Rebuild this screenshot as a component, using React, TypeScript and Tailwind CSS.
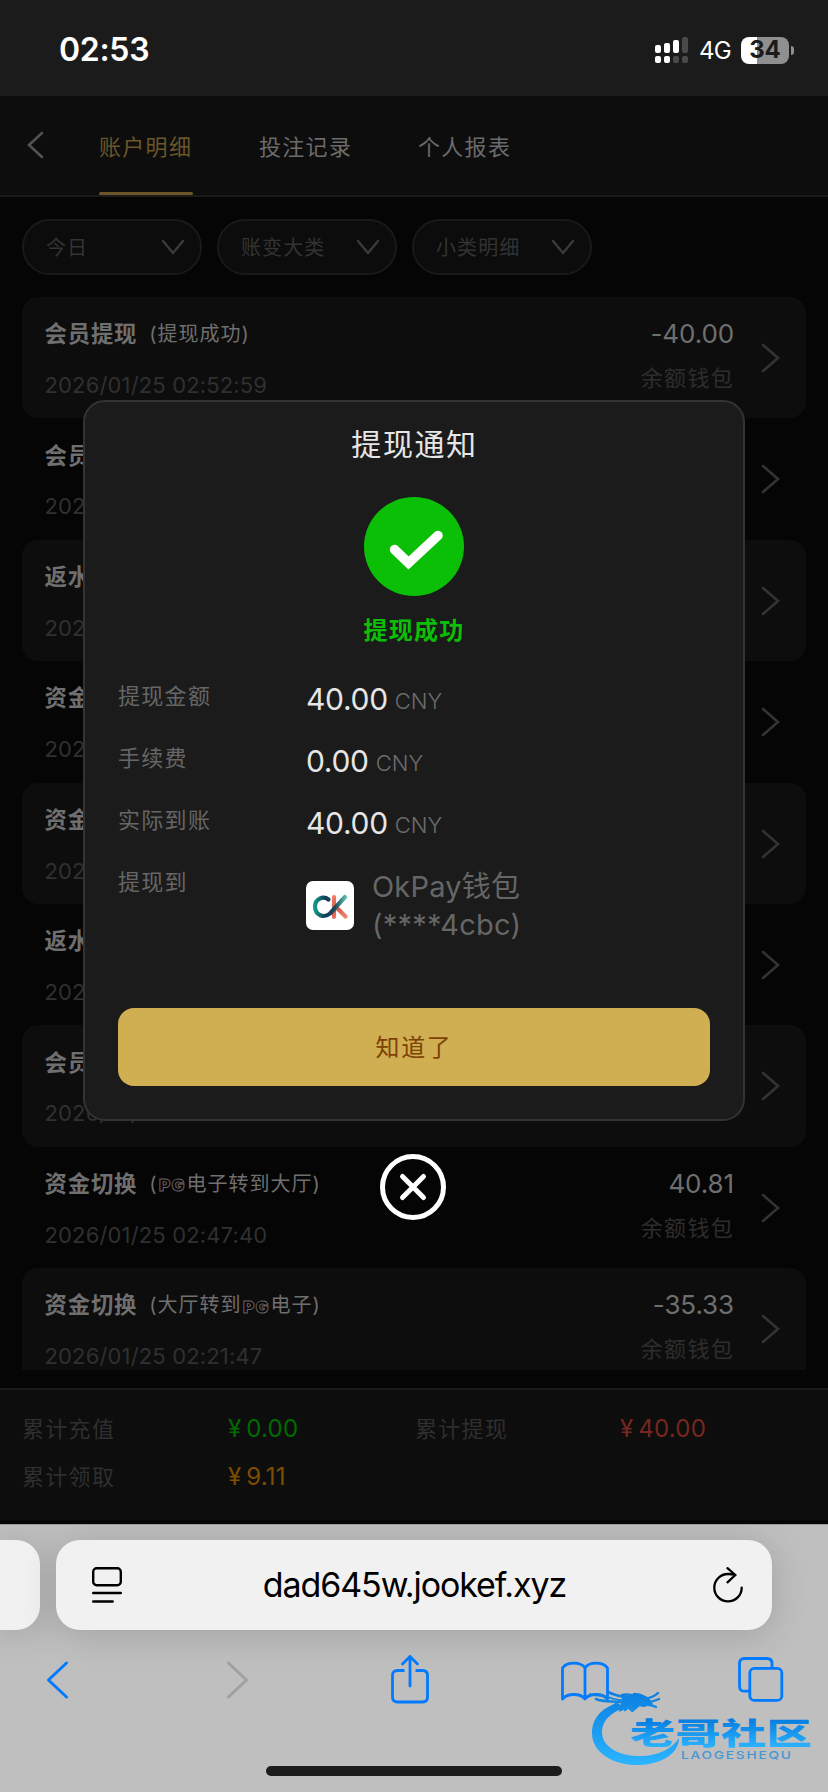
import type { ReactNode } from "react";

type Entry = {
  title: string;
  note: ReactNode;
  date: string;
  amount: string;
};

function PgMark() {
  return (
    <svg width="29" height="18" viewBox="0 0 29 18" className="mt-[3px] shrink-0">
      <text
        x="1"
        y="14.5"
        textLength="26.5"
        lengthAdjust="spacingAndGlyphs"
        fontFamily="Inter, sans-serif"
        fontWeight="900"
        fontSize="16.5"
        fill="#060606"
        stroke="#6a6468"
        strokeWidth="0.9"
      >
        PG
      </text>
    </svg>
  );
}

const entries: Entry[] = [
  { title: "会员提现", note: "(提现成功)", date: "2026/01/25 02:52:59", amount: "-40.00" },
  { title: "会员提现", note: "(提现申请)", date: "2026/01/25 02:50:31", amount: "-40.00" },
  { title: "返水领取", note: "", date: "2026/01/25 02:49:12", amount: "0.35" },
  { title: "资金切换", note: "", date: "2026/01/25 02:48:55", amount: "40.46" },
  { title: "资金切换", note: "", date: "2026/01/25 02:48:40", amount: "-40.81" },
  { title: "返水领取", note: "", date: "2026/01/25 02:48:20", amount: "0.35" },
  { title: "会员提现", note: "", date: "2026/01/25 02:48:02", amount: "-40.00" },
  {
    title: "资金切换",
    note: (
      <>
        (<PgMark />
        电子转到大厅)
      </>
    ),
    date: "2026/01/25 02:47:40",
    amount: "40.81",
  },
  {
    title: "资金切换",
    note: (
      <>
        (大厅转到
        <PgMark />
        电子)
      </>
    ),
    date: "2026/01/25 02:21:47",
    amount: "-35.33",
  },
];

function StatusBar() {
  const bars = [
    { x: 0, y: 8, h: 8, top: "#fff", dot: "#fff" },
    { x: 9, y: 6, h: 10, top: "#fff", dot: "#fff" },
    { x: 18, y: 3, h: 13, top: "#fff", dot: "#4a4a4a" },
    { x: 27, y: 0, h: 16, top: "#4a4a4a", dot: "#4a4a4a" },
  ];
  return (
    <div className="flex h-24 items-center justify-between bg-[#1b1b1b] pt-1 pr-[34px] pl-[59px] text-white">
      <span className="text-[32px] leading-none font-semibold tracking-[-0.3px]">02:53</span>
      <div className="flex items-center">
        <svg width="33" height="26" viewBox="0 0 33 26">
          {bars.map((b) => (
            <g key={b.x}>
              <rect x={b.x} y={b.y} width="6" height={b.h} rx="2" fill={b.top} />
              <rect x={b.x} y="19" width="6" height="7" rx="2" fill={b.dot} />
            </g>
          ))}
        </svg>
        <span className="mt-[2px] ml-[11px] w-[31px] text-[24px] leading-none tracking-[-0.8px] whitespace-nowrap">4G</span>
        <div className="ml-[11px] flex h-[27px] w-12 items-center justify-center rounded-[8px] bg-[linear-gradient(90deg,#fff_0_16px,#8f8f8f_16px)]">
          <span className="text-[24px] leading-none font-bold text-[#1b1b1b]">34</span>
        </div>
        <div className="ml-[2px] h-[9px] w-[3px] rounded-r-full bg-[#8f8f8f]" />
      </div>
    </div>
  );
}

function Tabs() {
  return (
    <div className="flex h-[101px] items-stretch border-b-2 border-[#1a1a1a] bg-[#0d0d0d] pl-[27px] text-[22px] tracking-[1.3px]">
      <svg width="17" height="28" viewBox="0 0 17 28" fill="none" stroke="#525252" strokeWidth="2.6" strokeLinecap="round" className="mt-[35px]">
        <path d="M15 2 2 14 15 26" />
      </svg>
      <div className="ml-[55px] flex w-[94px] flex-col justify-between text-[#6a5629]">
        <span className="mt-[34px] leading-[34px] whitespace-nowrap">账户明细</span>
        <span className="h-[3px] rounded-full bg-[#6a5629]" />
      </div>
      <span className="mt-[34px] ml-[66px] w-[94px] leading-[34px] whitespace-nowrap text-[#6b6b6b]">投注记录</span>
      <span className="mt-[34px] ml-[65px] w-[94px] leading-[34px] whitespace-nowrap text-[#6b6b6b]">个人报表</span>
    </div>
  );
}

function Filters() {
  return (
    <div className="flex gap-[15px] px-[22px] pt-[22px]">
      {["今日", "账变大类", "小类明细"].map((label) => (
        <div
          key={label}
          className="flex h-14 w-[180px] items-center justify-between rounded-full border-2 border-[#191919] bg-[#0c0c0c] pr-[15px] pl-[22px]"
        >
          <span className="pt-[2px] text-[20px] tracking-[1.1px] text-[#333]">{label}</span>
          <svg width="24" height="17" viewBox="0 0 24 17" fill="none" stroke="#3a3a3a" strokeWidth="2.4" strokeLinecap="round" strokeLinejoin="round">
            <path d="M2 2 12 14 22 2" />
          </svg>
        </div>
      ))}
    </div>
  );
}

function EntryRow({ entry, filled }: { entry: Entry; filled: boolean }) {
  return (
    <div
      className={`flex h-[121.4px] shrink-0 justify-between rounded-[16px] pr-[26px] pl-[22.5px] ${filled ? "bg-[#0d0d0d]" : ""}`}
    >
      <div className="pt-[21px]">
        <div className="flex h-8 items-center text-[#6f6f6f]">
          <span className="text-[22.4px] font-bold tracking-[0.8px]">{entry.title}</span>
          <span className="ml-[12px] flex items-center text-[20px] tracking-[1px]">{entry.note}</span>
        </div>
        <div className="mt-[20px] text-[22px] leading-[30px] tracking-[0.15px] text-[#303030]">{entry.date}</div>
      </div>
      <div className="flex">
        <div className="flex flex-col items-end pt-[21px]">
          <span className="text-[26px] leading-8 tracking-[-0.1px] text-[#6f6f6f]">{entry.amount}</span>
          <span className="mt-[12px] text-[22px] leading-[32px] tracking-[1.3px] text-[#2d2d2d]">余额钱包</span>
        </div>
        <svg width="19" height="30" viewBox="0 0 19 30" fill="none" stroke="#333" strokeWidth="2.6" strokeLinecap="round" className="mt-[46px] ml-[27px]">
          <path d="M2 2 17 15 2 28" />
        </svg>
      </div>
    </div>
  );
}

function Totals() {
  const label = "text-[22px] leading-[48px] tracking-[1.3px] text-[#2f2f2f]";
  const value = "text-[24px] leading-[48px] tracking-[0.2px] [word-spacing:-2px]";
  return (
    <div className="h-[136px] border-t-2 border-b-4 border-t-[#1a1a1a] border-b-[#050505] bg-[#0d0d0d]">
      <div className="grid grid-cols-[206px_187px_205px_1fr] pt-[15px] pl-[22px]">
        <span className={label}>累计充值</span>
        <span className={`${value} text-[#006b00]`}>¥ 0.00</span>
        <span className={label}>累计提现</span>
        <span className={`${value} text-[#76271f]`}>¥ 40.00</span>
        <span className={label}>累计领取</span>
        <span className={`${value} text-[#7d4d00]`}>¥ 9.11</span>
      </div>
    </div>
  );
}

function OkLogo() {
  return (
    <svg width="48" height="49" viewBox="0 0 48 49" fill="none" className="shrink-0 rounded-[7px] bg-white">
      <defs>
        <linearGradient id="ok-c" x1="8" y1="20" x2="40" y2="20" gradientUnits="userSpaceOnUse">
          <stop offset="0" stopColor="#13a08c" />
          <stop offset="0.35" stopColor="#123c55" />
          <stop offset="0.65" stopColor="#15475c" />
          <stop offset="1" stopColor="#5cc0ae" />
        </linearGradient>
        <linearGradient id="ok-k" x1="28" y1="15" x2="40" y2="37" gradientUnits="userSpaceOnUse">
          <stop offset="0" stopColor="#ee7d67" />
          <stop offset="0.5" stopColor="#d9564a" />
          <stop offset="1" stopColor="#f08a72" />
        </linearGradient>
      </defs>
      <g strokeWidth="4.2" strokeLinecap="round">
        <path d="M28 16v20M31 27l8.5 8.5" stroke="url(#ok-k)" />
        <path d="M22.5 18.5C17 14.5 9 18 9 25.5c0 9 9 12 15 7L39 16" stroke="url(#ok-c)" />
      </g>
    </svg>
  );
}

function Money({ label, value }: { label: string; value: string }) {
  return (
    <div className="flex h-[62px]">
      <span className="w-[188px] text-[22px] leading-[34px] tracking-[1.3px] text-[#666]">{label}</span>
      <div className="flex items-baseline gap-[7px]">
        <span className="text-[30px] leading-[40px] tracking-[-0.3px] text-[#e6e6e6]">{value}</span>
        <span className="-translate-y-[1.5px] text-[22px] font-light text-[#6c6c6c]">CNY</span>
      </div>
    </div>
  );
}

function NoticeDialog() {
  return (
    <div className="absolute top-[400px] left-[83px] flex w-[662px] flex-col items-center">
      <div className="flex h-[721px] w-full flex-col rounded-[22px] border-2 border-[#333] bg-[#1b1b1b] px-[33px]">
        <h2 className="mt-[21px] pl-px text-center text-[30px] leading-[42px] tracking-[1.6px] text-[#e6e6e6]">提现通知</h2>
        <svg width="100" height="99" viewBox="0 0 100 99" className="mx-auto mt-[32px]">
          <ellipse cx="50" cy="49.5" rx="50" ry="49.5" fill="#0abf06" />
          <path d="M30.500 52.500 44.500 66 74 38.500" fill="none" stroke="#fff" strokeWidth="9.500" strokeLinecap="round" strokeLinejoin="miter" />
        </svg>
        <p className="mt-[17px] text-center text-[24px] leading-[36px] font-bold tracking-[1.2px] text-[#0abf06]">提现成功</p>
        <div className="mt-[30px] flex flex-col">
          <Money label="提现金额" value="40.00" />
          <Money label="手续费" value="0.00" />
          <Money label="实际到账" value="40.00" />
          <div className="flex">
            <span className="w-[188px] text-[22px] leading-[34px] tracking-[1.3px] text-[#666]">提现到</span>
            <div className="flex items-center gap-[18px] pt-px text-[#666]">
              <OkLogo />
              <div className="pt-[2px] text-[29px] leading-[38px] tracking-[0.2px]">
                <div>OkPay钱包</div>
                <div>(****4cbc)</div>
              </div>
            </div>
          </div>
        </div>
        <button className="mt-auto mb-[33px] h-[78px] rounded-[16px] bg-[#d0ae52] pt-px text-[24px] tracking-[1.6px] text-[#7d4206]">知道了</button>
      </div>
      <svg width="66" height="66" viewBox="0 0 66 66" fill="none" stroke="#fff" strokeWidth="5" strokeLinecap="round" className="mt-[33px] mr-[2px]">
        <circle cx="33" cy="33" r="30.500" />
        <path d="M22.500 22.500 43.500 43.500M43.500 22.500 22.500 43.500" />
      </svg>
    </div>
  );
}

function Watermark() {
  return (
    <svg width="228" height="84" viewBox="0 0 228 84" className="absolute top-[1686px] left-[588px]">
      <defs>
        <linearGradient id="wm" x1="0" y1="6" x2="0" y2="78" gradientUnits="userSpaceOnUse">
          <stop offset="0" stopColor="#0b7fe0" />
          <stop offset="1" stopColor="#2bb4ff" />
        </linearGradient>
        <linearGradient id="wm-text" x1="0" y1="-26" x2="0" y2="3" gradientUnits="userSpaceOnUse">
          <stop offset="0" stopColor="#0579dd" />
          <stop offset="1" stopColor="#29b2ff" />
        </linearGradient>
      </defs>
      <g fill="url(#wm)">
        <path d="M30 17C12 22 4 34 4 47c0 20 22 33 48 32 21-1 39-11 39-27-7 11-20 17-36 18-22 1-41-8-41-24 0-11 8-19 22-24Z" />
        <path d="M34 12C42 8 54 9 61 12l4 6-9 3-6-1-8 5-2-3-9 4Z" />
      </g>
      <g fill="none" stroke="url(#wm)" strokeLinecap="round">
        <path d="M2 8c5 3 12 0 18 3s12 3 20 4" strokeWidth="1.800" />
        <path d="M8 13c7 3 14 2 24 3M20 6c8 4 14 5 24 6" strokeWidth="2.600" />
        <path d="M34 9c8-2 14 1 20 3M46 8c6 0 9 2 13 4M56 13c6-1 10-2 14-6M57 16c6 0 10-1 14-3" strokeWidth="2.400" />
        <path d="M56 19c5-1 8 0 12 2M42 20l-5 4M50 20l-6 5M28 18l-6 4" strokeWidth="2.400" />
      </g>
      <g transform="translate(42 57.500) scale(1.500 1)">
        <text
          x="0"
          y="0"
          textLength="121"
          fontFamily="'Noto Sans CJK SC', sans-serif"
          fontWeight="900"
          fontSize="30"
          fill="url(#wm-text)"
        >
          老哥社区
        </text>
      </g>
      <g transform="translate(93 72.500) scale(1.250 1)">
        <text x="0" y="0" textLength="88" fontFamily="Inter, sans-serif" fontWeight="500" fontSize="11" fill="#4496d4">
          LAOGESHEQU
        </text>
      </g>
    </svg>
  );
}

function BrowserChrome() {
  return (
    <div className="h-[268px] overflow-hidden border-t border-[#999] bg-[#bfbfbf]">
      <div className="flex h-[105px] gap-[16px] pt-[15px]">
        <div className="h-[90px] w-10 rounded-r-[24px] bg-[#f1f1f1] shadow-[0_4px_36px_rgba(0,0,0,0.16)]" />
        <div className="flex h-[90px] w-[716px] items-center justify-between rounded-[24px] bg-[#f1f1f1] pr-[29px] pl-[36px] shadow-[0_4px_36px_rgba(0,0,0,0.16)]">
          <svg width="30" height="36" viewBox="0 0 30 36" fill="none" stroke="#000" strokeWidth="2.400" strokeLinecap="round">
            <rect x="1.200" y="1.200" width="27.600" height="17" rx="3.500" />
            <path d="M1.200 26h27.600M1.200 34.500h19.500" />
          </svg>
          <span className="mr-[6px] text-[34px] leading-[44px] tracking-[-1.1px] text-black">dad645w.jookef.xyz</span>
          <svg width="30" height="36" viewBox="0 0 30 36" fill="none" stroke="#000" strokeWidth="2.300" strokeLinecap="round" strokeLinejoin="round">
            <path d="M22.300 8C19.500 7.200 17 7 15 7A13.700 13.700 0 1 0 28.700 20.700" />
            <path d="M14.500 1.200 22.300 8 14.500 15.300" />
          </svg>
        </div>
      </div>
      <div className="mt-[24px] flex h-[50px] items-center pl-[46px]">
        <svg width="23" height="38" viewBox="0 0 23 38" fill="none" stroke="#007aff" strokeWidth="3" strokeLinecap="round" strokeLinejoin="round" className="mt-[2px]">
          <path d="M20.500 2 2.500 19 20.500 36" />
        </svg>
        <svg width="23" height="38" viewBox="0 0 23 38" fill="none" stroke="#a0a0a0" strokeWidth="3" strokeLinecap="round" strokeLinejoin="round" className="mt-[2px] ml-[157px]">
          <path d="M2.500 2 20.500 19 2.500 36" />
        </svg>
        <svg width="38" height="50" viewBox="0 0 38 50" fill="none" stroke="#007aff" strokeWidth="2.800" strokeLinecap="round" strokeLinejoin="round" className="ml-[142px]">
          <path d="M13.500 16.500H6.500q-5 0-5 5V43q0 5 5 5h25q5 0 5-5V21.500q0-5-5-5h-7" strokeLinecap="butt" />
          <path d="M19 32V2.500M11.500 10 19 2.500 26.500 10" />
        </svg>
        <svg width="48" height="40" viewBox="0 0 48 40" fill="none" stroke="#007aff" strokeWidth="2.800" strokeLinejoin="round" className="mt-[3px] ml-[132px]">
          <path d="M24 7C20 .5 6 .5 1.500 7v31c5-6 18-6 22.500 0 4.500-6 17.500-6 22.500 0V7C42 .5 28 .5 24 7ZM24 7v31" />
        </svg>
        <svg width="46" height="45" viewBox="0 0 46 45" fill="none" stroke="#007aff" strokeWidth="2.800" className="ml-[129px]">
          <rect x="11.800" y="11.400" width="32" height="32" rx="4.500" />
          <path d="M11.500 34.200H6.500q-5 0-5-5V6.500q0-5 5-5H29q5 0 5 5v5" />
        </svg>
      </div>
      <div className="mx-auto mt-[62px] h-[10px] w-[296px] rounded-full bg-[#1c1c1c]" />
    </div>
  );
}

export default function App() {
  return (
    <div className="relative flex h-[1792px] w-[828px] flex-col overflow-hidden bg-[#050505] font-[Inter,'Noto_Sans_CJK_SC',sans-serif]">
      <StatusBar />
      <Tabs />
      <Filters />
      <div className="mx-[22px] mt-[22px] flex h-[1073px] flex-col overflow-hidden">
        {entries.map((entry, i) => (
          <EntryRow key={entry.date} entry={entry} filled={i % 2 === 0} />
        ))}
      </div>
      <div className="mt-[18px]">
        <Totals />
      </div>
      <BrowserChrome />
      <NoticeDialog />
      <Watermark />
    </div>
  );
}
